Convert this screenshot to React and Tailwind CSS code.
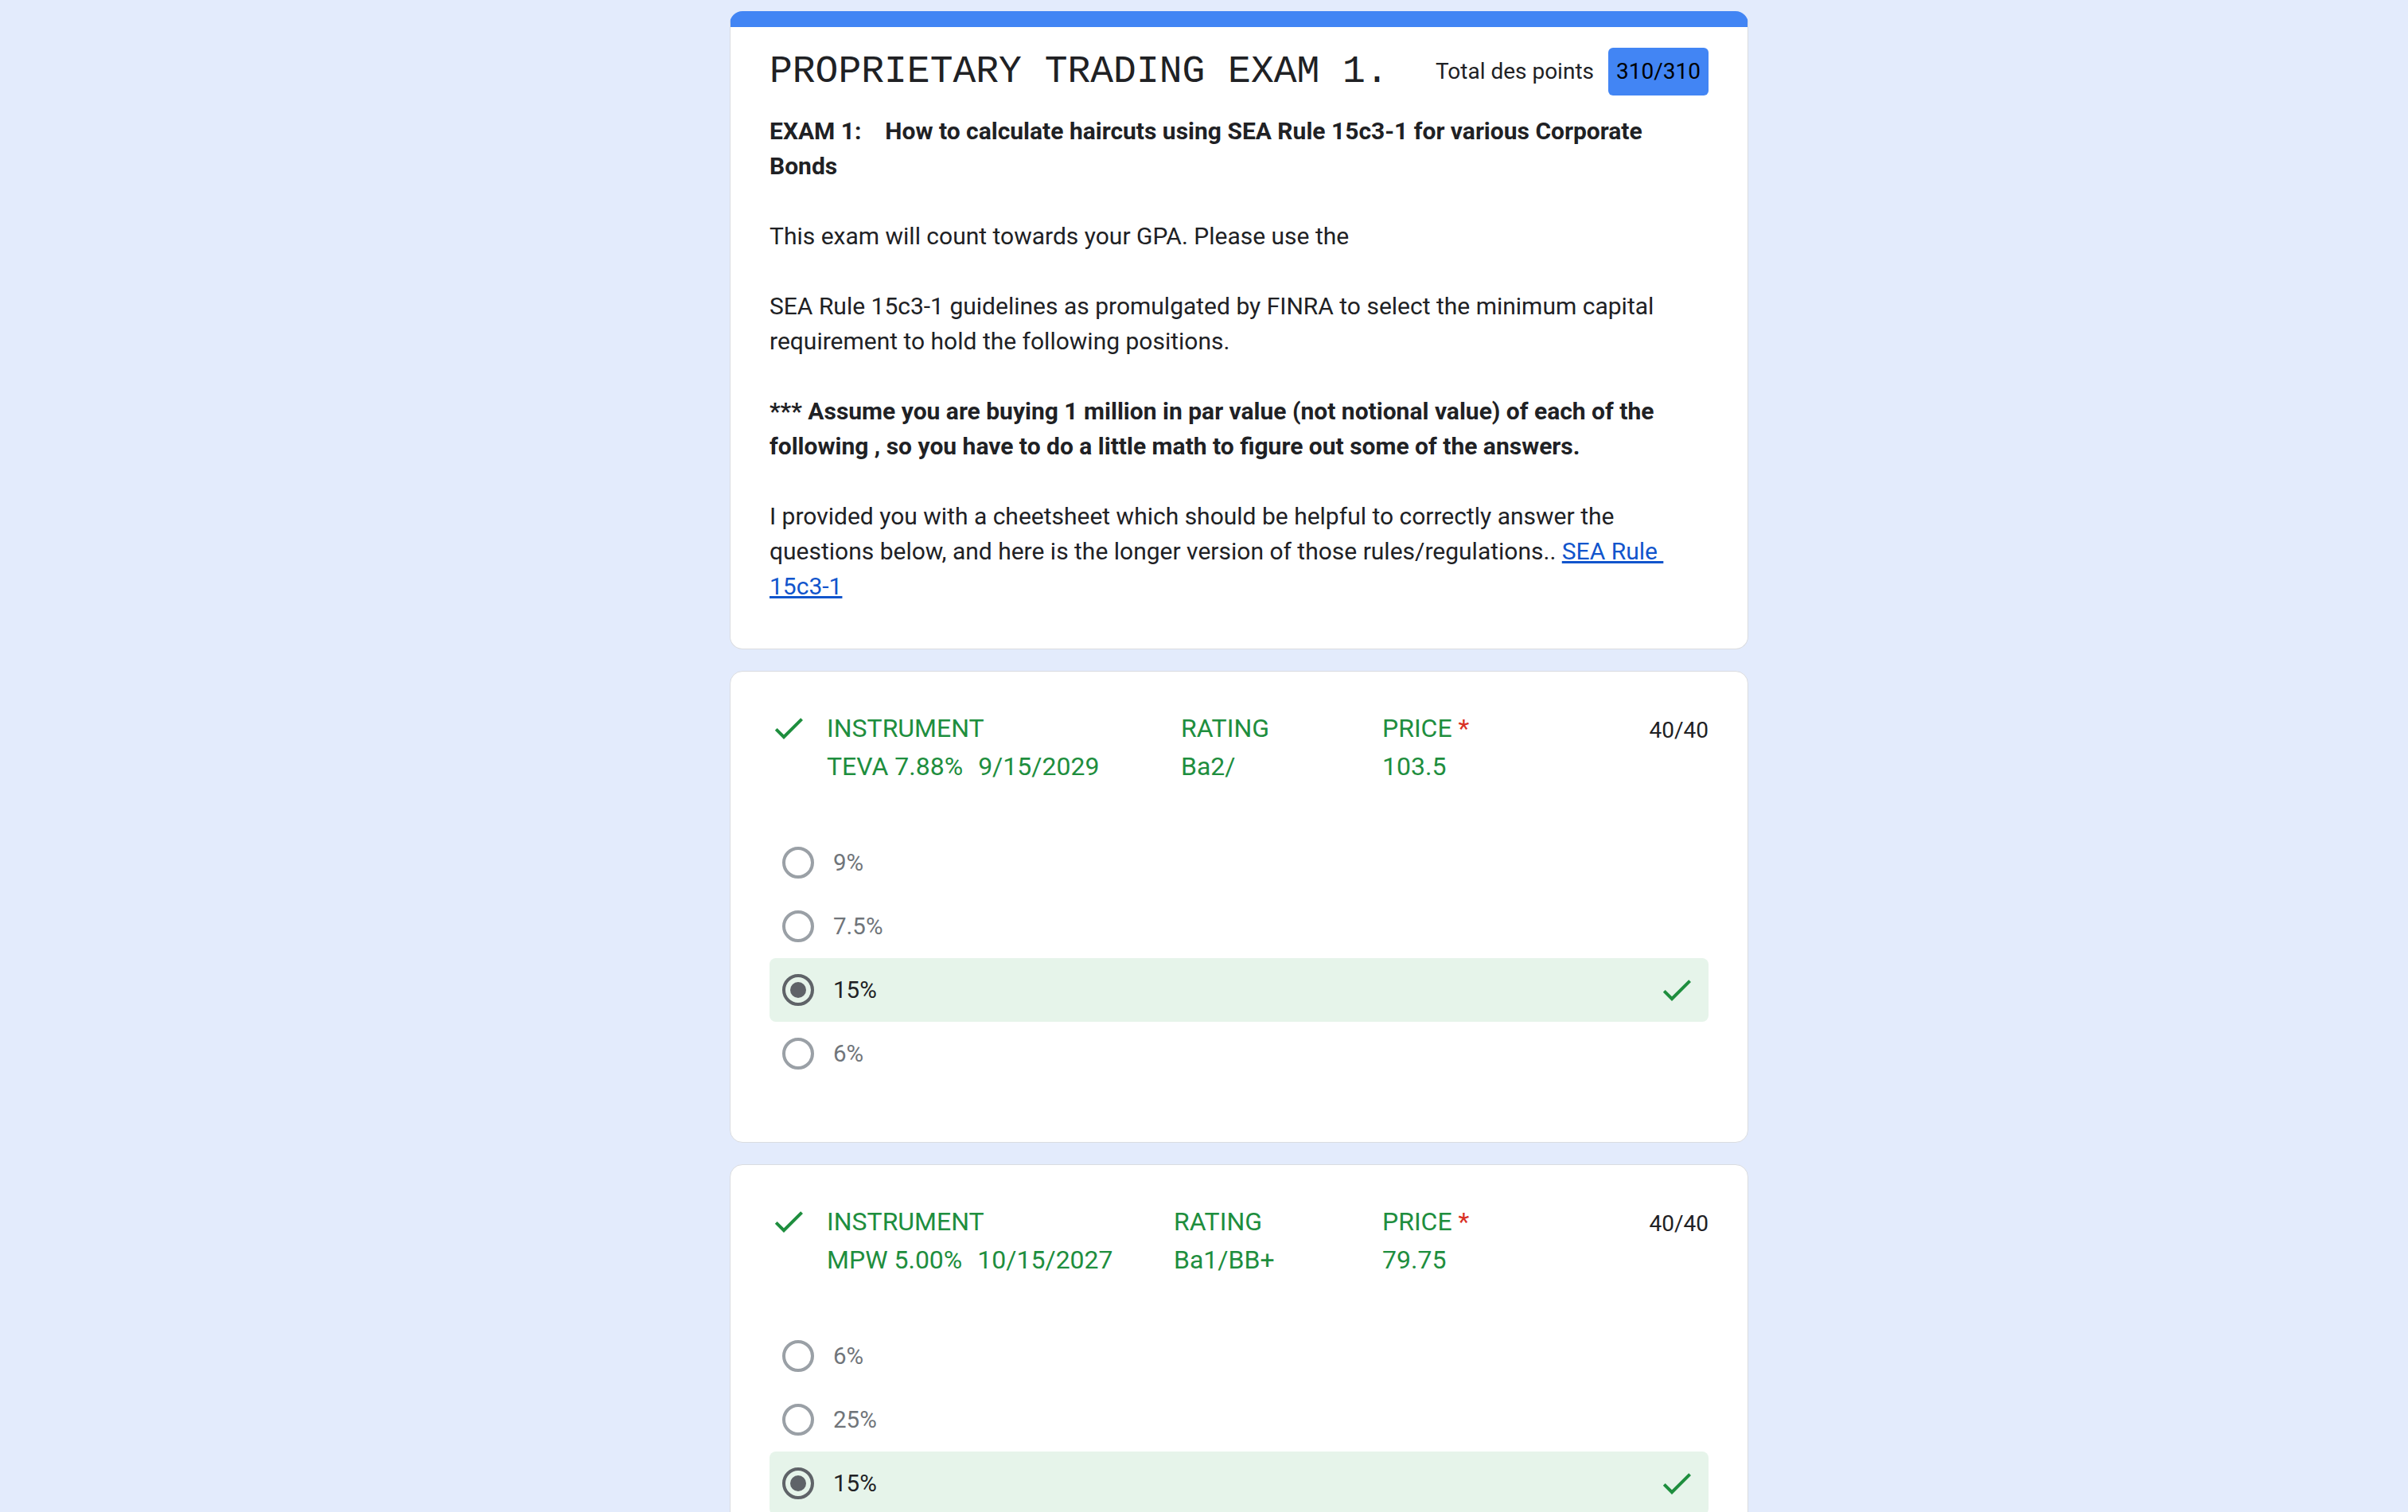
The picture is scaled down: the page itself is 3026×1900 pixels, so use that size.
const questions = [
  {
    id: 1,
    instrument: ["TEVA 7.88%", "9/15/2029"],
    rating: "Ba2/",
    price: "103.5",
    col1: "w-[445px]",
    col2: "w-[253px]",
    options: ["9%", "7.5%", "15%", "6%"],
    selected: "15%",
  },
  {
    id: 2,
    instrument: ["MPW 5.00%", "10/15/2027"],
    rating: "Ba1/BB+",
    price: "79.75",
    col1: "w-[436px]",
    col2: "w-[262px]",
    options: ["6%", "25%", "15%", "7.5%"],
    selected: "15%",
  },
];

function Check({ className }) {
  return (
    <svg viewBox="0 0 24 24" className={className} fill="#1e8e3e">
      <path d="M9 16.17L4.83 12l-1.42 1.41L9 19 21 7l-1.41-1.41z" />
    </svg>
  );
}

function Radio({ checked }) {
  if (checked) {
    return (
      <div className="w-[40px] h-[40px] rounded-full border-[4px] border-[#5f6368] flex items-center justify-center shrink-0">
        <div className="w-[20px] h-[20px] rounded-full bg-[#5f6368]" />
      </div>
    );
  }
  return (
    <div className="w-[40px] h-[40px] rounded-full border-[4px] border-[#9aa0a6] shrink-0" />
  );
}

function Question({ q }) {
  return (
    <div className="bg-white rounded-2xl border border-[#dadce0] px-[49px] pt-[47px] pb-[71px]">
      <div className="flex items-start">
        <Check className="w-[48px] h-[48px] shrink-0" />
        <div className="ml-[24px] flex text-[32px] leading-[48px] text-[#1e8e3e] whitespace-pre">
          <div className={q.col1}>
            <div>INSTRUMENT</div>
            <div>
              {q.instrument[0]}
              <span className="ml-[19px]">{q.instrument[1]}</span>
            </div>
          </div>
          <div className={q.col2}>
            <div>RATING</div>
            <div>{q.rating}</div>
          </div>
          <div>
            <div>
              PRICE <span className="text-[#d93025]">*</span>
            </div>
            <div>{q.price}</div>
          </div>
        </div>
        <div className="ml-auto pt-[3px] text-[28px] leading-[48px] text-[#202124]">40/40</div>
      </div>

      <div className="mt-[57px] flex flex-col">
        {q.options.map((opt) => {
          const isSel = opt === q.selected;
          return (
            <div
              key={opt}
              className={
                isSel
                  ? "h-[80px] flex items-center pl-[16px] pr-[16px] rounded-lg bg-[#e6f4ea]"
                  : "h-[80px] flex items-center pl-[16px] pr-[16px]"
              }
            >
              <Radio checked={isSel} />
              <span
                className={
                  isSel
                    ? "ml-[24px] text-[29.5px] text-[#202124]"
                    : "ml-[24px] text-[29.5px] text-[#70757a]"
                }
              >
                {opt}
              </span>
              {isSel && <Check className="ml-auto w-[48px] h-[48px]" />}
            </div>
          );
        })}
      </div>
    </div>
  );
}

export default function App() {
  return (
    <div className="min-h-screen bg-[#e3ebfc] pt-[14px] pl-[917px] font-['Roboto',sans-serif]">
      <div className="w-[1280px] flex flex-col gap-[27px]">
        {/* header card */}
        <div className="bg-white rounded-2xl border border-[#dadce0] border-t-[20px] border-t-[#4285f4] px-[49px] pt-[26px] pb-[56px]">
          <div className="h-[60px] flex items-center justify-between">
            <h1 className="font-['Liberation_Mono',monospace] text-[48px] text-[#202124]">
              PROPRIETARY TRADING EXAM 1.
            </h1>
            <div className="flex items-center gap-[18px]">
              <span className="text-[28px] text-[#202124]">Total des points</span>
              <div className="w-[126px] h-[60px] rounded-[6px] bg-[#4285f4] flex items-center justify-center text-[28px] text-black">
                310/310
              </div>
            </div>
          </div>

          <div className="mt-[23px] flex flex-col gap-[44px] text-[30px] leading-[44px] text-[#202124]">
            <p className="font-bold whitespace-pre-wrap">
              {"EXAM 1:    How to calculate haircuts using SEA Rule 15c3-1 for various Corporate Bonds"}
            </p>
            <p>This exam will count towards your GPA. Please use the</p>
            <p>
              SEA Rule 15c3-1 guidelines as promulgated by FINRA to select the minimum capital
              requirement to hold the following positions.
            </p>
            <p className="font-bold">
              *** Assume you are buying 1 million in par value (not notional value) of each of the
              following , so you have to do a little math to figure out some of the answers.
            </p>
            <p>
              I provided you with a cheetsheet which should be helpful to correctly answer the
              questions below, and here is the longer version of those rules/regulations..{" "}
              <a href="#" className="text-[#1155cc] underline">
                {"SEA Rule\u00a0 15c3-1"}
              </a>
            </p>
          </div>
        </div>

        {questions.map((q) => (
          <Question key={q.id} q={q} />
        ))}
      </div>
    </div>
  );
}
